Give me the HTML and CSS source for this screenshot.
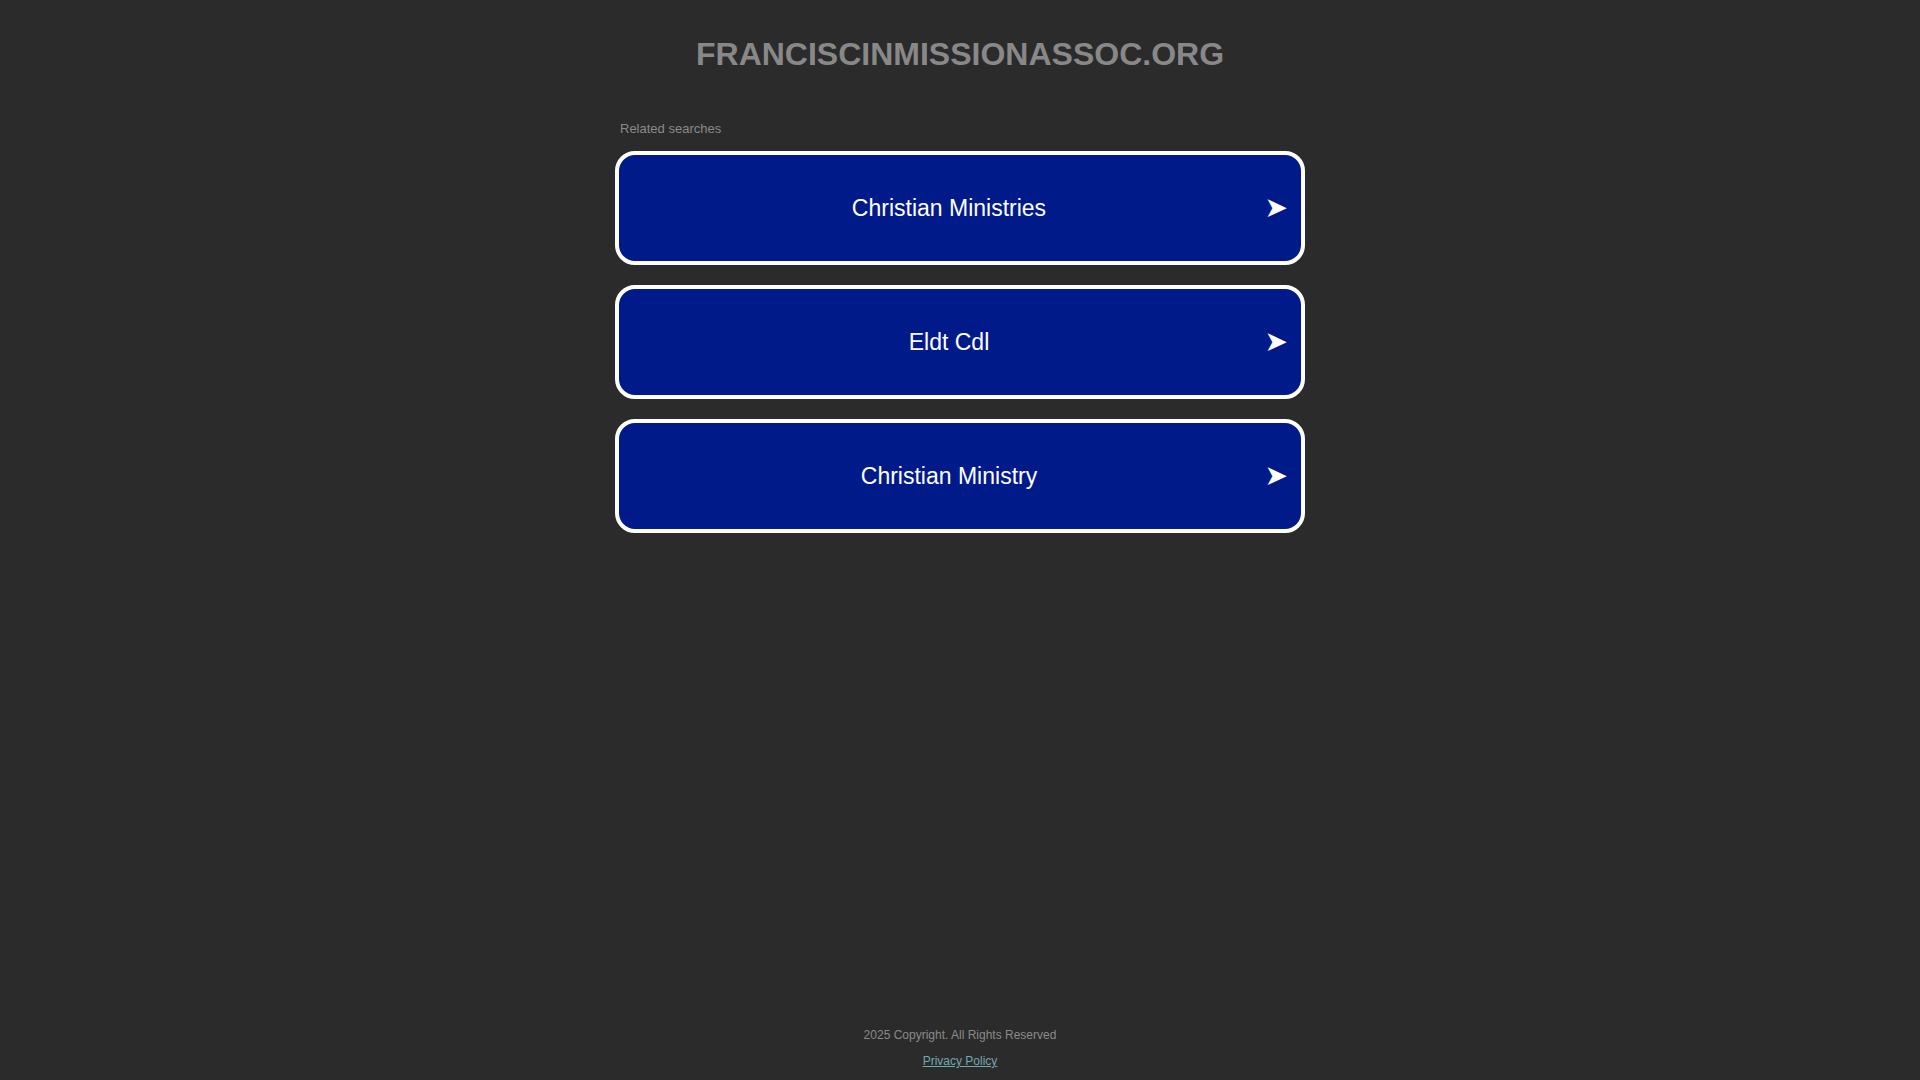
FILE: index.html
```html
<!DOCTYPE html>
<html lang="en">
<head>
<meta charset="utf-8">
<title>franciscinmissionassoc.org</title>
<link rel="stylesheet" href="styles.css">
</head>
<body>
<div class="page">
  <header class="header">
    <h1 class="domain">FRANCISCINMISSIONASSOC.ORG</h1>
  </header>
  <main class="content">
    <div class="related-title">Related searches</div>
    <ul class="ads-list">
      <li class="ads-item"><a class="ad-link" href="#"><span class="ad-text">Christian Ministries</span><span class="ad-arrow">➤</span></a></li>
      <li class="ads-item"><a class="ad-link" href="#"><span class="ad-text">Eldt Cdl</span><span class="ad-arrow">➤</span></a></li>
      <li class="ads-item"><a class="ad-link" href="#"><span class="ad-text">Christian Ministry</span><span class="ad-arrow">➤</span></a></li>
    </ul>
  </main>
  <footer class="footer">
    <div class="copyright">2025 Copyright. All Rights Reserved</div>
    <a class="privacy" href="#">Privacy Policy</a>
  </footer>
</div>
</body>
</html>
```

FILE: styles.css
```css
html, body {
  margin: 0;
  padding: 0;
  background: #2b2b2b;
  font-family: "Liberation Sans", Arial, sans-serif;
}

.page {
  min-height: 100vh;
  display: flex;
  flex-direction: column;
  align-items: center;
}

.header {
  padding-top: 36px;
}

.domain {
  margin: 0;
  font-size: 32px;
  line-height: 37px;
  font-weight: bold;
  color: #888888;
  text-align: center;
}

.content {
  width: 690px;
  margin-top: 48px;
}

.related-title {
  font-size: 13px;
  line-height: 15px;
  color: #8a8a8a;
  padding-left: 5px;
  margin-bottom: 15px;
}

.ads-list {
  list-style: none;
  margin: 0;
  padding: 0;
  display: flex;
  flex-direction: column;
  gap: 20px;
}

.ad-link {
  position: relative;
  display: block;
  height: 106px;
  line-height: 106px;
  border: 4px solid #ffffff;
  border-radius: 20px;
  background: #011a8a;
  color: #ffffff;
  text-decoration: none;
  font-size: 23px;
  padding-right: 22px;
  text-align: center;
}

.ad-arrow {
  position: absolute;
  right: 13px;
  top: 0;
  font-family: "DejaVu Sans", sans-serif;
  font-size: 28px;
  color: #ffffff;
}

.footer {
  margin-top: auto;
  padding-bottom: 12px;
  display: flex;
  flex-direction: column;
  align-items: center;
  gap: 12px;
}

.copyright {
  font-size: 12px;
  line-height: 14px;
  color: #8a8a8a;
}

.privacy {
  font-size: 12px;
  line-height: 14px;
  color: #72a9ab;
}
```
